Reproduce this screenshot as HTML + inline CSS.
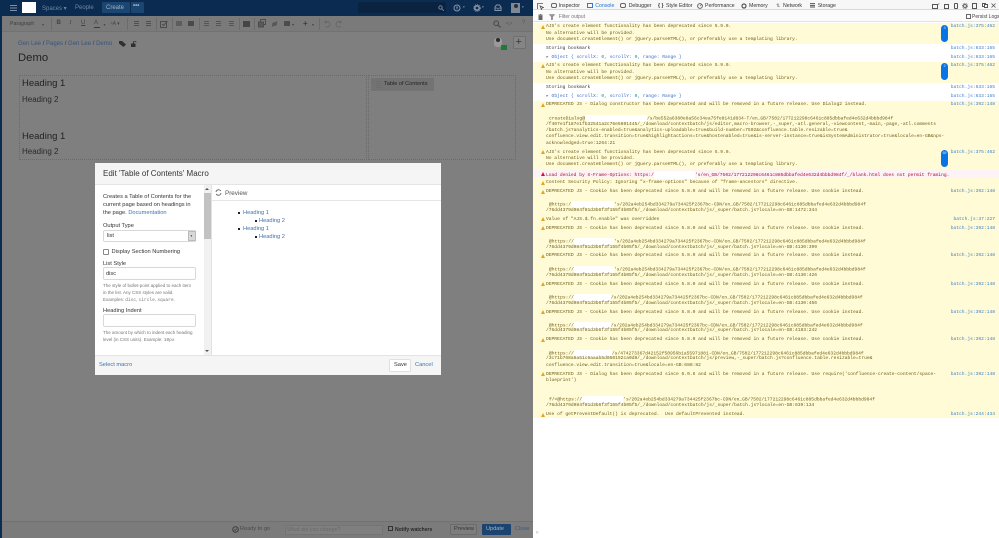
<!DOCTYPE html>
<html><head><meta charset="utf-8"><title>Demo</title>
<style>
html,body{margin:0;padding:0;width:999px;height:538px;overflow:hidden;background:#fff}
*{box-sizing:border-box}
.a{position:absolute}
#left{position:absolute;left:0;top:0;width:533px;height:538px;background:#7f7f7f;overflow:hidden;font-family:"Liberation Sans",sans-serif;filter:blur(.3px)}
.t{position:absolute;white-space:nowrap}
.nv{color:#6f86a3;font-size:6px;top:4.500px}
.tb{color:#444;font-size:6px;top:21px}
.ic{position:absolute;background:#4f4f4f}
.crumb{color:#35557f;font-size:6px;top:41px}
.h1{color:#222;font-size:9.500px;left:22px}
.h2{color:#2a2a2a;font-size:8px;left:22px}
#dlg{position:absolute;left:95px;top:163px;width:346px;height:212px;background:#fff;font-family:"Liberation Sans",sans-serif;filter:blur(.25px)}
#dlg .t{color:#333;font-size:5.700px}
#dlg .lnk{color:#3b73af}
.in{position:absolute;background:#fff;border:1px solid #d8d8d8;border-radius:2px}
#right{position:absolute;left:533px;top:0;width:466px;height:538px;background:#fff;font-family:"Liberation Sans",sans-serif;overflow:hidden;filter:blur(.25px)}
.tab{position:absolute;top:2.500px;font-size:5.200px;color:#333;white-space:nowrap}
.r{position:absolute;left:0;width:466px}
.y{background:#fffbd6}.w{background:#fff}.p{background:#fdf2f5}
.l{position:absolute;left:13px;font:4.610px/6px "Liberation Mono",monospace;color:#6f5d1a;white-space:pre}
.d{color:#3c3c3c}
.i{left:16px}
.m{color:#a80d36}
.b{position:absolute;right:4px;font:4.610px/6px "Liberation Mono",monospace;color:#3f7fc9;white-space:pre}
.x{display:inline-block;background:#fff;height:7px;vertical-align:middle}
.tri{position:absolute;left:8px;width:0;height:0;border-left:2.200px solid transparent;border-right:2.200px solid transparent;border-bottom:4.400px solid #e8a21c}
.pill{position:absolute;left:408.300px;width:6.500px;height:17px;border-radius:4px;background:#0a74e6;color:#cfe4ff;font:3.500px/6px "Liberation Sans",sans-serif;text-align:center}
</style></head><body>

<div id="left">
  <!-- nav -->
  <div class="a" style="left:0;top:0;width:533px;height:16px;background:#0b2b50"></div>
  <div class="a" style="left:0;top:16px;width:2px;height:522px;background:#0b2b50"></div>
  <div class="a" style="left:10px;top:5px;width:7px;height:1px;background:#7e90a8;box-shadow:0 2.500px 0 #7e90a8,0 5px 0 #7e90a8"></div>
  <div class="a" style="left:22px;top:2px;width:14px;height:11px;background:#fff"></div>
  <div class="t nv" style="left:42px">Spaces ▾</div>
  <div class="t nv" style="left:75px">People</div>
  <div class="a" style="left:102px;top:2px;width:28px;height:11px;background:#1c4672;border-radius:1px"></div>
  <div class="t nv" style="left:106px;color:#a3b2c5">Create</div>
  <div class="a" style="left:130.500px;top:2px;width:13.500px;height:11px;background:#1c4672;border-radius:1px"></div>
  <div class="t nv" style="left:133px;top:3px;color:#a3b2c5;font-weight:bold">•••</div>
  <div class="a" style="left:358px;top:2px;width:88px;height:11px;background:#0a2340;border-radius:2px"></div>
  <svg class="a" style="left:438px;top:5px" width="6" height="6" viewBox="0 0 6 6"><circle cx="2.500" cy="2.500" r="1.700" fill="none" stroke="#6e7f95"/><path d="M4 4l2 2" stroke="#6e7f95"/></svg>
  <svg class="a" style="left:453px;top:4px" width="8" height="8" viewBox="0 0 8 8"><circle cx="4" cy="4" r="3" fill="none" stroke="#8795a8" stroke-width="1"/><path d="M3 3h2M4 3v2.500" stroke="#8795a8" stroke-width=".8"/></svg>
  <div class="t nv" style="left:463px;top:5px;font-size:3.500px;color:#8795a8">▾</div>
  <svg class="a" style="left:473px;top:4px" width="8" height="8" viewBox="0 0 8 8"><circle cx="4" cy="4" r="2.200" fill="none" stroke="#8795a8" stroke-width="1.600"/><circle cx="4" cy="4" r="3.400" fill="none" stroke="#8795a8" stroke-width=".8" stroke-dasharray="1 1"/></svg>
  <div class="t nv" style="left:482px;top:5px;font-size:3.500px;color:#8795a8">▾</div>
  <svg class="a" style="left:494px;top:4px" width="8" height="8" viewBox="0 0 8 8"><path d="M1 3l1.500-2h3L7 3v3.500H1z" fill="none" stroke="#8795a8"/><path d="M1 4h2l.5 1h1L5 4h2" fill="none" stroke="#8795a8" stroke-width=".7"/></svg>
  <div class="a" style="left:511px;top:3px;width:9px;height:10px;background:#7f8996"></div>
  <div class="a" style="left:513.500px;top:4px;width:4px;height:4px;background:#2f2f2f;border-radius:2px"></div>
  <div class="t nv" style="left:522px;top:5px;font-size:3.500px;color:#8795a8">▾</div>

  <!-- toolbar -->
  <div class="a" style="left:2px;top:16px;width:531px;height:16px;background:#7a7a7a;border-bottom:1px solid #727272"></div>
  <div class="t tb" style="left:10px;top:20.500px;font-size:5.200px;color:#3f3f3f">Paragraph</div>
  <div class="t tb" style="left:42px;top:21.500px;font-size:4px">▾</div>
  <div class="a" style="left:51px;top:18px;width:1px;height:12px;background:#6c6c6c"></div>
  <div class="t tb" style="left:56.500px;top:20px;font-weight:bold">B</div>
  <div class="t tb" style="left:69.500px;top:20px;font-style:italic;font-family:'Liberation Serif',serif">I</div>
  <div class="t tb" style="left:81px;top:20px;text-decoration:underline">U</div>
  <div class="t tb" style="left:94px;top:19.500px">A</div>
  <div class="a" style="left:93.500px;top:27px;width:6px;height:1px;background:#1f3f7a"></div>
  <div class="t tb" style="left:103.500px;top:21.500px;font-size:4px">▾</div>
  <div class="t tb" style="left:111px;top:20.500px;font-size:5px">¹A ▾</div>
  <div class="a" style="left:127px;top:18px;width:1px;height:12px;background:#6c6c6c"></div>
  <div class="ic" style="left:134px;top:21px;width:5px;height:5px;background:repeating-linear-gradient(#4f4f4f 0 1px,transparent 1px 2px)"></div>
  <div class="ic" style="left:146px;top:21px;width:5px;height:5px;background:repeating-linear-gradient(#4f4f4f 0 1px,transparent 1px 2px)"></div>
  <div class="a" style="left:156px;top:18px;width:1px;height:12px;background:#6c6c6c"></div>
  <svg class="a" style="left:160px;top:20px" width="8" height="8" viewBox="0 0 8 8"><rect x=".5" y="1.500" width="6" height="6" fill="none" stroke="#4c4c4c"/><path d="M2 4l1.500 1.500L7.500 1" fill="none" stroke="#4c4c4c"/></svg>
  <div class="a" style="left:172px;top:18px;width:1px;height:12px;background:#6c6c6c"></div>
  <div class="ic" style="left:176px;top:21px;width:6px;height:5px;background:#5d5d5d"></div>
  <div class="ic" style="left:188px;top:21px;width:6px;height:5px;background:#4a4a4a"></div>
  <div class="a" style="left:199px;top:18px;width:1px;height:12px;background:#6c6c6c"></div>
  <div class="ic" style="left:204px;top:21px;width:5px;height:5px;background:repeating-linear-gradient(#555 0 1px,transparent 1px 2px)"></div>
  <div class="ic" style="left:216px;top:21px;width:5px;height:5px;background:repeating-linear-gradient(#555 0 1px,transparent 1px 2px)"></div>
  <div class="ic" style="left:229px;top:21px;width:5px;height:5px;background:repeating-linear-gradient(#555 0 1px,transparent 1px 2px)"></div>
  <div class="a" style="left:239px;top:18px;width:1px;height:12px;background:#6c6c6c"></div>
  <div class="ic" style="left:243px;top:21px;width:7px;height:6px;background:#454545"></div>
  <div class="a" style="left:254px;top:18px;width:1px;height:12px;background:#6c6c6c"></div>
  <svg class="a" style="left:258px;top:19px" width="8" height="9" viewBox="0 0 8 9"><rect x="2.500" y=".5" width="5" height="5" fill="none" stroke="#4c4c4c"/><rect x=".5" y="3" width="5" height="5" fill="#5a5a5a" stroke="#4c4c4c"/></svg>
  <svg class="a" style="left:271px;top:20px" width="7" height="8" viewBox="0 0 7 8"><path d="M1 6.500L6 1.500M1.200 4.500L3.500 2.200M3.500 6L6 3.500" stroke="#4c4c4c" fill="none"/></svg>
  <div class="ic" style="left:284px;top:21px;width:6px;height:5px;background:#4c4c4c"></div>
  <div class="t tb" style="left:292px;top:21.500px;font-size:4px">▾</div>
  <div class="t tb" style="left:303px;top:19px;font-size:8px;font-weight:bold;color:#3f3f3f">+</div>
  <div class="t tb" style="left:312px;top:21.500px;font-size:4px">▾</div>
  <div class="a" style="left:319px;top:18px;width:1px;height:12px;background:#6c6c6c"></div>
  <svg class="a" style="left:323px;top:20px" width="8" height="8" viewBox="0 0 8 8"><path d="M2 2.500A2.800 2.800 0 1 1 2.500 6.500M2 .5v2.200h2.200" fill="none" stroke="#656565" stroke-width=".8"/></svg>
  <svg class="a" style="left:335px;top:20px" width="8" height="8" viewBox="0 0 8 8"><path d="M6 2.500A2.800 2.800 0 1 0 5.500 6.500M6 .5v2.200H3.800" fill="none" stroke="#656565" stroke-width=".8"/></svg>
  <svg class="a" style="left:493px;top:20px" width="8" height="8" viewBox="0 0 8 8"><circle cx="3.200" cy="3.200" r="2.300" fill="none" stroke="#474747"/><path d="M5 5l2.500 2.500" stroke="#474747" stroke-width="1.200"/></svg>
  <div class="t tb" style="left:506px;top:20.500px;font-size:5.500px;color:#595959">&lt;&gt;</div>
  <div class="t tb" style="left:522px;top:20px;color:#595959">?</div>

  <!-- breadcrumb -->
  <div class="t crumb" style="left:18px">Gen Lee <span style="color:#333">/</span> Pages <span style="color:#333">/</span> Gen Lee <span style="color:#333">/</span> Demo</div>
  <svg class="a" style="left:119px;top:41px" width="7" height="6" viewBox="0 0 7 6"><path d="M0 0h3l4 3.500L4.500 6 0 2.500z" fill="#2f2f2f"/></svg>
  <svg class="a" style="left:131px;top:41px" width="6" height="6" viewBox="0 0 6 6"><rect x="0" y="2.500" width="4.500" height="3.500" fill="#2f2f2f"/><path d="M2.500 2.500V1.200A1.200 1.200 0 0 1 5 1.200" fill="none" stroke="#2f2f2f" stroke-width=".8"/></svg>
  <div class="t" style="left:18px;top:52px;font-size:11.300px;color:#222">Demo</div>
  <div class="a" style="left:494px;top:38px;width:8px;height:9px;background:#9a9a9a;border-radius:3px"></div>
  <div class="a" style="left:496px;top:38px;width:4px;height:4px;background:#2b2b2b;border-radius:2px"></div>
  <div class="a" style="left:501px;top:45px;width:6px;height:5px;background:#1f7a36"></div>
  <div class="a" style="left:513px;top:36px;width:13px;height:13px;background:#858585;border:1px solid #707070;border-radius:1px"></div>
  <div class="t" style="left:515.500px;top:36px;font-size:11px;color:#3a3a3a">+</div>

  <!-- editor table -->
  <div class="a" style="left:19px;top:75px;width:348px;height:85px;border:1px dotted #6a6a6a"></div>
  <div class="a" style="left:368px;top:75px;width:148px;height:85px;border:1px dotted #6a6a6a"></div>
  <div class="t h1" style="top:78px">Heading 1</div>
  <div class="t h2" style="top:95px">Heading 2</div>
  <div class="t h1" style="top:130.500px">Heading 1</div>
  <div class="t h2" style="top:147px">Heading 2</div>
  <div class="a" style="left:371px;top:78px;width:63px;height:13px;background:#737373"></div>
  <div class="a" style="left:376px;top:81px;width:5px;height:7px;background:repeating-linear-gradient(#5c7088 0 1px,transparent 1px 2px)"></div>
  <div class="t" style="left:384px;top:81px;font-size:5.600px;color:#222">Table of Contents</div>

  <!-- bottom bar -->
  <div class="a" style="left:2px;top:521px;width:531px;height:17px;background:#7b7b7b;border-top:1px solid #717171"></div>
  <svg class="a" style="left:231.500px;top:526px" width="7" height="7" viewBox="0 0 7 7"><circle cx="3.500" cy="3.500" r="2.800" fill="none" stroke="#3f3f3f"/><path d="M2 3.500l1.200 1.200L5 2.500" fill="none" stroke="#3f3f3f" stroke-width=".7"/></svg>
  <div class="t" style="left:240px;top:526px;font-size:5.600px;color:#4a4a4a">Ready to go</div>
  <div class="a" style="left:285px;top:525px;width:98px;height:10px;background:#7f7f7f;border:1px solid #747474"></div>
  <div class="t" style="left:287px;top:526.500px;font-size:5.400px;color:#6a6a6a">What did you change?</div>
  <div class="a" style="left:388px;top:526px;width:5px;height:5px;border:.7px solid #333"></div>
  <div class="t" style="left:395px;top:526.500px;font-size:5px;font-weight:bold;color:#2a2a2a">Notify watchers</div>
  <div class="a" style="left:450px;top:524px;width:27px;height:11px;background:#7d7d7d;border:1px solid #6c6c6c;border-radius:1px"></div>
  <div class="t" style="left:454px;top:526px;font-size:5.600px;color:#333">Preview</div>
  <div class="a" style="left:482px;top:524px;width:29px;height:11px;background:#1b4470;border-radius:1px"></div>
  <div class="t" style="left:486px;top:526px;font-size:5.600px;color:#a3b2c5">Update</div>
  <div class="t" style="left:515px;top:526px;font-size:5.600px;color:#3a5a80">Close</div>
</div>

<!-- dialog -->
<div id="dlg">
  <div class="a" style="left:0;top:0;width:346px;height:22px;background:#f5f5f5;border-bottom:1px solid #e4e4e4"></div>
  <div class="t" style="left:8px;top:6px;color:#333"><span style="font-size:8px">Edit 'Table of Contents' Macro</span></div>

  <div class="t" style="left:8px;top:30px;line-height:8px;white-space:normal;width:92px">Creates a Table of Contents for the current page based on headings in the page. <span class="lnk">Documentation</span></div>
  <div class="t" style="left:8px;top:59.500px">Output Type</div>
  <div class="in" style="left:8px;top:66.500px;width:93px;height:12px"></div>
  <div class="t" style="left:12px;top:69.500px">list</div>
  <div class="a" style="left:93px;top:67.500px;width:7.500px;height:10px;background:#d8d8d8;border:1px solid #bbb"></div>
  <div class="a" style="left:95.500px;top:71px;font-size:3.500px;color:#444;line-height:4px">▾</div>
  <div class="a" style="left:8px;top:86px;width:6px;height:6px;border:1px solid #8a8a8a;border-radius:1px"></div>
  <div class="t" style="left:16.500px;top:85.500px">Display Section Numbering</div>
  <div class="t" style="left:8px;top:97.500px">List Style</div>
  <div class="in" style="left:8px;top:104px;width:93px;height:13px"></div>
  <div class="t" style="left:11px;top:107.500px">disc</div>
  <div class="t" style="left:8px;top:120px;line-height:6.800px;white-space:normal;width:92px;color:#777;font-size:4.500px"><span style="color:#777;font-size:4.500px">The style of bullet-point applied to each item in the list. Any CSS styles are valid. Examples: <span style="font-family:'Liberation Mono',monospace">disc</span>, <span style="font-family:'Liberation Mono',monospace">circle</span>, <span style="font-family:'Liberation Mono',monospace">square</span>.</span></div>
  <div class="t" style="left:8px;top:144.500px">Heading Indent</div>
  <div class="in" style="left:8px;top:151px;width:93px;height:13px"></div>
  <div class="t" style="left:8px;top:167px;line-height:6.800px;white-space:normal;width:90px"><span style="color:#777;font-size:4.500px">The amount by which to indent each heading level (in CSS units). Example: <span style="font-family:'Liberation Mono',monospace">10px</span></span></div>

  <!-- scrollbar -->
  <div class="a" style="left:109px;top:22px;width:6.500px;height:170px;background:#f1f1f1"></div>
  <div class="a" style="left:109px;top:30px;width:6.500px;height:46px;background:#c2c2c2"></div>
  <div class="a" style="left:110px;top:25px;border-left:2px solid transparent;border-right:2px solid transparent;border-bottom:2px solid #555"></div>
  <div class="a" style="left:110px;top:187px;border-left:2px solid transparent;border-right:2px solid transparent;border-top:2px solid #555"></div>
  <div class="a" style="left:115.500px;top:22px;width:1px;height:170px;background:#e2e2e2"></div>

  <!-- preview -->
  <div class="a" style="left:116px;top:37px;width:230px;height:1px;background:#e6e6e6"></div>
  <svg class="a" style="left:120px;top:26px" width="7" height="7" viewBox="0 0 7 7"><path d="M1 3A2.600 2.600 0 0 1 5.800 2M6 4A2.600 2.600 0 0 1 1.200 5" fill="none" stroke="#555" stroke-width=".8"/></svg>
  <div class="t" style="left:130px;top:26.500px;color:#555"><span style="font-size:6.300px">Preview</span></div>
  <div class="a" style="left:143px;top:49px;width:2px;height:2px;background:#222"></div>
  <div class="t lnk" style="left:148px;top:46.500px">Heading 1</div>
  <div class="a" style="left:159.500px;top:57px;width:2px;height:2px;background:#222"></div>
  <div class="t lnk" style="left:164px;top:54.500px">Heading 2</div>
  <div class="a" style="left:143px;top:65px;width:2px;height:2px;background:#222"></div>
  <div class="t lnk" style="left:148px;top:62.500px">Heading 1</div>
  <div class="a" style="left:159.500px;top:73px;width:2px;height:2px;background:#222"></div>
  <div class="t lnk" style="left:164px;top:70.500px">Heading 2</div>

  <!-- footer -->
  <div class="a" style="left:0;top:192px;width:346px;height:20px;background:#f5f5f5;border-top:1px solid #e4e4e4"></div>
  <div class="t lnk" style="left:4px;top:198.500px">Select macro</div>
  <div class="a" style="left:294px;top:196px;width:22px;height:13px;background:#fff;border:1px solid #e0e0e0;border-radius:2px"></div>
  <div class="t" style="left:299px;top:199px">Save</div>
  <div class="t lnk" style="left:320px;top:198.500px">Cancel</div>
</div>

<!-- devtools -->
<div id="right">
  <div class="a" style="left:0;top:0;width:466px;height:10px;background:#f7f7f8;border-bottom:1px solid #d8d8da"></div>
  <div class="a" style="left:0;top:10px;width:466px;height:12px;background:#fbfbfb;border-bottom:1px solid #e3e3e3"></div>
  <svg class="a" style="left:4px;top:2.500px" width="7" height="7" viewBox="0 0 7 7"><path d="M6 .5H.5V6M3 3l3.500 1.500-1.500.5-.5 1.500z" fill="none" stroke="#555" stroke-width=".8"/></svg>
  <svg class="a" style="left:18px;top:3px" width="6" height="5" viewBox="0 0 6 5"><rect x=".5" y=".5" width="5" height="4" rx="1.500" fill="none" stroke="#666"/></svg>
  <div class="tab" style="left:25.700px">Inspector</div>
  <div class="a" style="left:54px;top:3px;width:5.500px;height:5px;border:.8px solid #2a7be0"></div>
  <div class="tab" style="left:62.300px;color:#1f6fd1">Console</div>
  <svg class="a" style="left:87px;top:3px" width="6" height="5" viewBox="0 0 6 5"><rect x=".5" y=".5" width="5" height="4" rx="1.500" fill="none" stroke="#666"/></svg>
  <div class="tab" style="left:95.700px">Debugger</div>
  <div class="tab" style="left:125px;font-weight:bold">{ }</div>
  <div class="tab" style="left:133px">Style Editor</div>
  <svg class="a" style="left:164px;top:2.500px" width="6" height="6" viewBox="0 0 6 6"><circle cx="3" cy="3" r="2.400" fill="none" stroke="#666"/><path d="M3 3l1.500-1.500" stroke="#666" stroke-width=".7"/></svg>
  <div class="tab" style="left:172px">Performance</div>
  <svg class="a" style="left:208px;top:2.500px" width="6" height="6" viewBox="0 0 6 6"><circle cx="3" cy="3" r="2" fill="none" stroke="#555" stroke-width="1.200"/></svg>
  <div class="tab" style="left:216px">Memory</div>
  <div class="tab" style="left:243px;color:#777">⇅</div>
  <div class="tab" style="left:250px">Network</div>
  <div class="a" style="left:277px;top:3px;width:4.500px;height:5px;background:repeating-linear-gradient(#666 0 1px,#ddd 1px 1.800px)"></div>
  <div class="tab" style="left:284.700px">Storage</div>
  <div class="a" style="left:399px;top:3.500px;width:6px;height:5px;border:.8px solid #555"></div>
  <div class="a" style="left:405px;top:3px;font-size:3px;color:#666;line-height:3px">▾</div>
  <div class="a" style="left:410.500px;top:3.500px;width:5.500px;height:5px;border:.8px solid #555"></div>
  <div class="a" style="left:421px;top:3px;width:4px;height:6px;border:.8px solid #555;border-radius:1px"></div>
  <svg class="a" style="left:429px;top:2.500px" width="6" height="6" viewBox="0 0 6 6"><circle cx="3" cy="3" r="1.500" fill="none" stroke="#666"/><circle cx="3" cy="3" r="2.600" fill="none" stroke="#666" stroke-width=".7" stroke-dasharray="1 .6"/></svg>
  <div class="a" style="left:439px;top:3px;width:5px;height:5.500px;border:.8px solid #555"></div>
  <div class="a" style="left:449px;top:2.500px;width:4px;height:4px;border:.8px solid #555;background:#fff"></div>
  <div class="a" style="left:450.500px;top:4px;width:4px;height:4px;border:.8px solid #555;background:#fff"></div>
  <svg class="a" style="left:458px;top:3px" width="5" height="5" viewBox="0 0 5 5"><path d="M.5.500l4 4M4.500.500l-4 4" stroke="#555" stroke-width=".8"/></svg>
  <svg class="a" style="left:4.500px;top:14px" width="5" height="6" viewBox="0 0 5 6"><path d="M0 1h5M1.800 1V.3h1.400V1M.7 1.500h3.600V6H.7z" fill="#666" stroke="#666" stroke-width=".4"/></svg>
  <svg class="a" style="left:16px;top:14px" width="6" height="6" viewBox="0 0 6 6"><path d="M.3.500h5.400L3.600 3v2.500L2.400 6V3z" fill="#999" stroke="#666" stroke-width=".4"/></svg>
  <div class="a" style="left:25.700px;top:14px;font-size:5px;color:#777;white-space:nowrap">Filter output</div>
  <div class="a" style="left:432.700px;top:14px;width:5px;height:5px;border:.7px solid #666"></div>
  <div class="a" style="left:439px;top:14px;font-size:5px;color:#444;white-space:nowrap">Persist Logs</div>

  <div class="r y" style="top:23px;height:21px"></div>
  <div class="r w" style="top:44px;height:18px"></div>
  <div class="r y" style="top:62px;height:21px"></div>
  <div class="r w" style="top:83px;height:18px"></div>
  <div class="r y" style="top:101px;height:69px"></div>
  <div class="r p" style="top:170px;height:8px"></div>
  <div class="r y" style="top:178px;height:240px"></div>

  <div class="tri" style="top:24.500px"></div>
  <div class="l" style="top:24px">AJS's create element functionality has been deprecated since 5.9.0.</div>
  <div class="l" style="top:30.500px">No alternative will be provided.</div>
  <div class="l" style="top:37px">Use document.createElement() or jQuery.parseHTML(), or preferably use a templating library.</div>
  <div class="pill" style="top:25px">3</div><div class="b" style="top:24px">batch.js:375:462</div>
  <div class="l d" style="top:45.500px">Storing bookmark</div><div class="b" style="top:45.500px">batch.js:633:165</div>
  <div class="l" style="top:54.500px;color:#3a6fc0"><span style="color:#555">▸</span> Object { scrollX: <span style="color:#0a9a7a">0</span>, scrollY: <span style="color:#0a9a7a">0</span>, range: Range }</div><div class="b" style="top:54.500px">batch.js:633:165</div>

  <div class="tri" style="top:63.500px"></div>
  <div class="l" style="top:63px">AJS's create element functionality has been deprecated since 5.9.0.</div>
  <div class="l" style="top:69.500px">No alternative will be provided.</div>
  <div class="l" style="top:76px">Use document.createElement() or jQuery.parseHTML(), or preferably use a templating library.</div>
  <div class="pill" style="top:63px">2</div><div class="b" style="top:63px">batch.js:375:462</div>
  <div class="l d" style="top:84.500px">Storing bookmark</div><div class="b" style="top:84.500px">batch.js:633:165</div>
  <div class="l" style="top:93.500px;color:#3a6fc0"><span style="color:#555">▸</span> Object { scrollX: <span style="color:#0a9a7a">0</span>, scrollY: <span style="color:#0a9a7a">0</span>, range: Range }</div><div class="b" style="top:93.500px">batch.js:633:165</div>

  <div class="tri" style="top:102.500px"></div>
  <div class="l" style="top:102px">DEPRECATED JS - Dialog constructor has been deprecated and will be removed in a future release. Use Dialog2 instead.</div><div class="b" style="top:102px">batch.js:392:148</div>
  <div class="l i" style="top:115px">createDialog@<span class="x" style="width:62px"></span>/s/be552a6380e8a56c34ea75fe8141d834-T/en_GB/7502/177212298c6461c885dbbafed4e632d4bbbd984f</div>
  <div class="l" style="top:121.500px">/f407e1f187e1fb32541a2c76e5601445/_/download/contextbatch/js/editor,macro-browser,-_super,-atl.general,-viewcontent,-main,-page,-atl.comments</div>
  <div class="l" style="top:128px">/batch.js?analytics-enabled=true&amp;analytics-uploadable=true&amp;build-number=7502&amp;confluence.table.resizable=true&amp;</div>
  <div class="l" style="top:134px">confluence.view.edit.transition=true&amp;highlightactions=true&amp;hostenabled=true&amp;is-server-instance=true&amp;isSystemAdministrator=true&amp;locale=en-GB&amp;nps-</div>
  <div class="l" style="top:140.500px">acknowledged=true:1264:21</div>

  <div class="tri" style="top:150px"></div>
  <div class="l" style="top:149.500px">AJS's create element functionality has been deprecated since 5.9.0.</div>
  <div class="l" style="top:156px">No alternative will be provided.</div>
  <div class="l" style="top:162px">Use document.createElement() or jQuery.parseHTML(), or preferably use a templating library.</div>
  <div class="pill" style="top:150px">65</div><div class="b" style="top:149.500px">batch.js:375:462</div>

  <div class="tri" style="top:171.500px;border-bottom-color:#d0103a"></div>
  <div class="l m" style="top:171px">Load denied by X-Frame-Options: https:/<span class="x" style="width:41px;height:8px"></span>'s/en_GB/7502/177212298c6461c885dbbafed4e632d4bbbd984f/_/blank.html does not permit framing.</div>
  <div class="tri" style="top:180.500px"></div>
  <div class="l" style="top:180px">Content Security Policy: Ignoring "x-frame-options" because of "frame-ancestors" directive.</div>

  <div class="tri" style="top:189.500px"></div>
  <div class="l" style="top:189px">DEPRECATED JS - Cookie has been deprecated since 5.8.0 and will be removed in a future release. Use cookie instead.</div><div class="b" style="top:189px">batch.js:392:148</div>
  <div class="l i" style="top:201px">@https:/<span class="x" style="width:43px"></span>'s/202a4eb254bd334279a734425f2367bc-CDN/en_GB/7502/177212298c6461c885dbbafed4e632d4bbbd984f</div>
  <div class="l" style="top:207.500px">/76dd4379d984f81d3b6f3f155f4b05f5/_/download/contextbatch/js/_super/batch.js?locale=en-GB:1472:344</div>

  <div class="tri" style="top:217px"></div>
  <div class="l" style="top:216.500px">Value of "AJS.$.fn.enable" was overridden</div><div class="b" style="top:216.500px">batch.js:37:227</div>

  <div class="tri" style="top:226px"></div>
  <div class="l" style="top:225.500px">DEPRECATED JS - Cookie has been deprecated since 5.8.0 and will be removed in a future release. Use cookie instead.</div><div class="b" style="top:225.500px">batch.js:392:148</div>
  <div class="l i" style="top:238px">@https://<span class="x" style="width:40px"></span>'s/202a4eb254bd334279a734425f2367bc-CDN/en_GB/7502/177212298c6461c885dbbafed4e632d4bbbd984f</div>
  <div class="l" style="top:244.500px">/76dd4379d984f81d3b6f3f155f4b05f5/_/download/contextbatch/js/_super/batch.js?locale=en-GB:4130:399</div>

  <div class="tri" style="top:253.500px"></div>
  <div class="l" style="top:253px">DEPRECATED JS - Cookie has been deprecated since 5.8.0 and will be removed in a future release. Use cookie instead.</div><div class="b" style="top:253px">batch.js:392:148</div>
  <div class="l i" style="top:266px">@https://<span class="x" style="width:40px"></span>'s/202a4eb254bd334279a734425f2367bc-CDN/en_GB/7502/177212298c6461c885dbbafed4e632d4bbbd984f</div>
  <div class="l" style="top:272.500px">/76dd4379d984f81d3b6f3f155f4b05f5/_/download/contextbatch/js/_super/batch.js?locale=en-GB:4130:426</div>

  <div class="tri" style="top:282px"></div>
  <div class="l" style="top:281.500px">DEPRECATED JS - Cookie has been deprecated since 5.8.0 and will be removed in a future release. Use cookie instead.</div><div class="b" style="top:281.500px">batch.js:392:148</div>
  <div class="l i" style="top:294px">@https://<span class="x" style="width:37px"></span>/s/202a4eb254bd334279a734425f2367bc-CDN/en_GB/7502/177212298c6461c885dbbafed4e632d4bbbd984f</div>
  <div class="l" style="top:300.500px">/76dd4379d984f81d3b6f3f155f4b05f5/_/download/contextbatch/js/_super/batch.js?locale=en-GB:4130:456</div>

  <div class="tri" style="top:310px"></div>
  <div class="l" style="top:309.500px">DEPRECATED JS - Cookie has been deprecated since 5.8.0 and will be removed in a future release. Use cookie instead.</div><div class="b" style="top:309.500px">batch.js:392:148</div>
  <div class="l i" style="top:322px">@https://<span class="x" style="width:37px"></span>/s/202a4eb254bd334279a734425f2367bc-CDN/en_GB/7502/177212298c6461c885dbbafed4e632d4bbbd984f</div>
  <div class="l" style="top:328px">/76dd4379d984f81d3b6f3f155f4b05f5/_/download/contextbatch/js/_super/batch.js?locale=en-GB:4183:242</div>

  <div class="tri" style="top:337.500px"></div>
  <div class="l" style="top:337px">DEPRECATED JS - Cookie has been deprecated since 5.8.0 and will be removed in a future release. Use cookie instead.</div><div class="b" style="top:337px">batch.js:392:148</div>
  <div class="l i" style="top:349.500px">@https://<span class="x" style="width:38px"></span>/s/474273367d42152f50956b1a55971881-CDN/en_GB/7502/177212298c6461c885dbbafed4e632d4bbbd984f</div>
  <div class="l" style="top:356px">/3c71b768a6a51c6aaab5d050192ca0d8/_/download/contextbatch/js/preview,-_super/batch.js?confluence.table.resizable=true&amp;</div>
  <div class="l" style="top:362.500px">confluence.view.edit.transition=true&amp;locale=en-GB:688:82</div>

  <div class="tri" style="top:372px"></div>
  <div class="l" style="top:371.500px">DEPRECATED JS - Dialog has been deprecated since 6.0.6 and will be removed in a future release. Use require('confluence-create-content/space-</div><div class="b" style="top:371.500px">batch.js:392:148</div>
  <div class="l" style="top:378px">blueprint')</div>
  <div class="l i" style="top:396px">f/&lt;@https://<span class="x" style="width:41px"></span>'s/202a4eb254bd334279a734425f2367bc-CDN/en_GB/7502/177212298c6461c885dbbafed4e632d4bbbd984f</div>
  <div class="l" style="top:403px">/76dd4379d984f81d3b6f3f155f4b05f5/_/download/contextbatch/js/_super/batch.js?locale=en-GB:639:134</div>

  <div class="tri" style="top:412.500px"></div>
  <div class="l" style="top:412px">Use of getPreventDefault() is deprecated.  Use defaultPrevented instead.</div><div class="b" style="top:412px">batch.js:244:434</div>

  <div class="a" style="left:2.500px;top:529px;font-size:6px;line-height:8px;color:#bbb">»</div>
</div>
</body></html>
